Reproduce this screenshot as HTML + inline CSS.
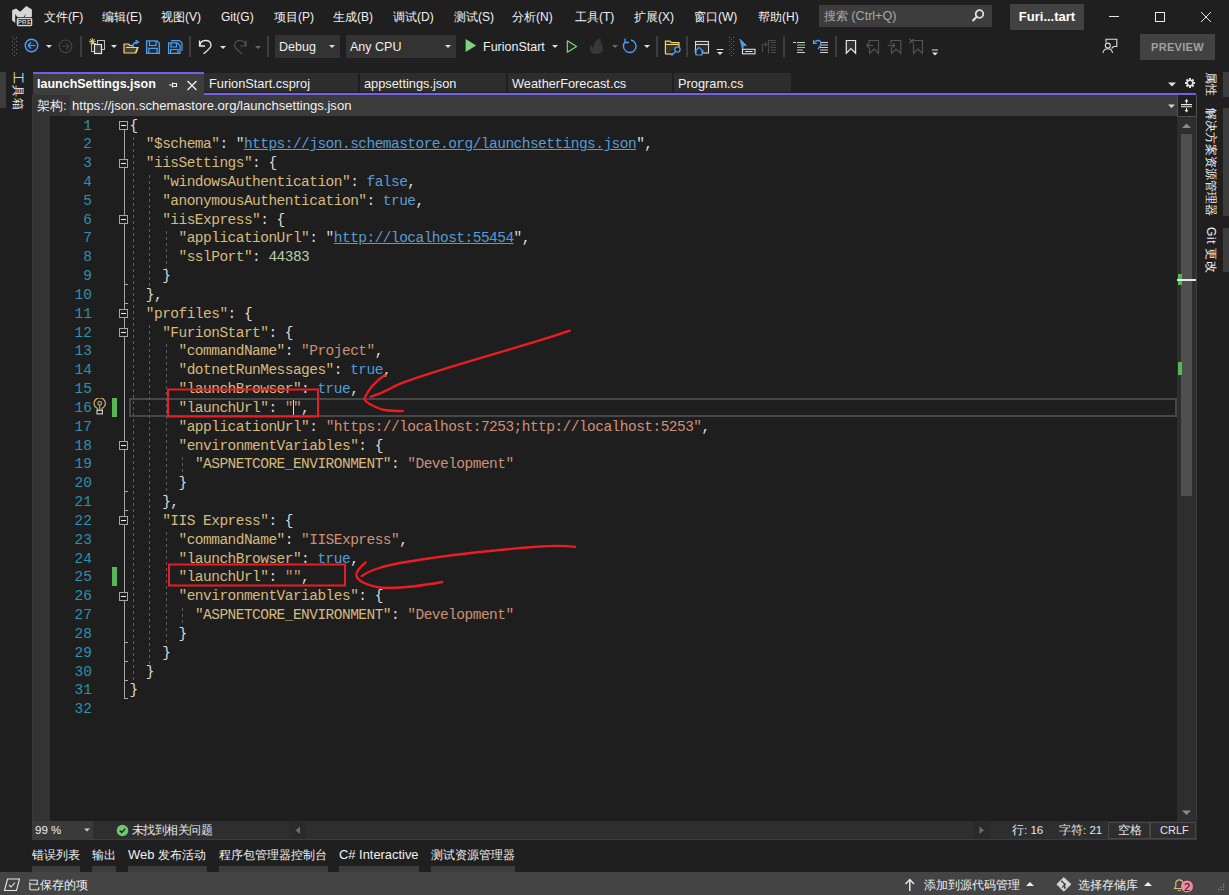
<!DOCTYPE html>
<html><head><meta charset="utf-8">
<style>
*{margin:0;padding:0;box-sizing:border-box}
html,body{width:1229px;height:895px;overflow:hidden;background:#1f1f1f;font-family:"Liberation Sans",sans-serif;color:#f0f0f0;font-size:12px}
.a{position:absolute;white-space:nowrap}
.menu span{position:absolute;top:9px;font-size:12px;line-height:16px;color:#f1f1f1}

.ln{position:absolute;width:92px;text-align:right;color:#2b91af;font-family:"Liberation Mono",monospace;font-size:14.5px;line-height:18px}
.cl{position:absolute;left:129.5px;color:#dcdcdc;font-family:"Liberation Mono",monospace;white-space:pre;font-size:14.5px;letter-spacing:-0.53px;line-height:18px}
.ig{position:absolute;width:1px;background:repeating-linear-gradient(#5c5c5c 0 3px,transparent 3px 6px)}
.ob{position:absolute;left:119px;width:9px;height:9px;border:1px solid #a5a5a5;background:#1e1e1e}
.ob:after{content:"";position:absolute;left:1px;top:3px;width:5px;height:1px;background:#f0f0f0}
.vt{writing-mode:vertical-rl;text-orientation:sideways;font-size:12px;color:#f0f0f0;letter-spacing:0}
.k{color:#d7ba7d}.s{color:#ce9178}.b{color:#569cd6}.n{color:#b5cea8}.u{color:#569cd6;text-decoration:underline}
</style></head><body>
<!-- title / menu bar -->
<div class="menu">
<svg class="a" style="left:8px;top:2px" width="30" height="28" viewBox="8 2 30 28"><path d="M12.1 10.3 L16.1 8.5 L20.2 11.8 L26.3 5.9 L31.9 9.5 V16.9 H24.6 L26.1 13.2 L23.6 16.9 H17.2 L15.2 13.9 V23 L12.1 20.4 Z" fill="#d6d6d6"/><rect x="17.4" y="18.5" width="14.2" height="7" rx="1" fill="#0e0e0e" stroke="#d6d6d6" stroke-width="1.3"/><text x="24.5" y="24.3" font-size="6.2" font-family="Liberation Sans" font-weight="bold" text-anchor="middle" fill="#d6d6d6" letter-spacing="0.3">PRE</text></svg>
<span style="left:44px">文件(F)</span>
<span style="left:102px">编辑(E)</span>
<span style="left:161px">视图(V)</span>
<span style="left:221px">Git(G)</span>
<span style="left:274px">项目(P)</span>
<span style="left:333px">生成(B)</span>
<span style="left:393px">调试(D)</span>
<span style="left:454px">测试(S)</span>
<span style="left:512px">分析(N)</span>
<span style="left:575px">工具(T)</span>
<span style="left:634px">扩展(X)</span>
<span style="left:694px">窗口(W)</span>
<span style="left:758px">帮助(H)</span>
</div>
<div class="a" style="left:819px;top:5px;width:173px;height:22px;background:#3d3d3d"></div>
<div class="a" style="left:824px;top:9px;color:#a8a8a8;font-size:12px;line-height:14px">搜索 <span style="font-size:12.6px">(Ctrl+Q)</span></div>
<svg class="a" style="left:970px;top:8px" width="16" height="16"><circle cx="9.5" cy="6" r="3.8" fill="none" stroke="#e0e0e0" stroke-width="1.8"/><path d="M7 8.5 L2.5 13" stroke="#e0e0e0" stroke-width="2.2"/></svg>
<div class="a" style="left:1010px;top:4px;width:74px;height:26px;background:#424242;font-weight:bold;font-size:13px;text-align:center;line-height:26px;color:#fff">Furi...tart</div>
<div class="a" style="left:1109px;top:16px;width:10px;height:1px;background:#e8e8e8"></div>
<div class="a" style="left:1155px;top:12px;width:10px;height:10px;border:1px solid #e8e8e8"></div>
<svg class="a" style="left:1200px;top:11px" width="12" height="12"><path d="M1 1 L11 11 M11 1 L1 11" stroke="#e8e8e8" stroke-width="1"/></svg>

<!-- toolbar placeholder -->
<svg class="a" style="left:0;top:30px" width="1229" height="34" viewBox="0 30 1229 34">
<g fill="#6a6a6a">
<rect x="12" y="37" width="1" height="1"/><rect x="16" y="37" width="1" height="1"/><rect x="14" y="39" width="1" height="1"/>
<rect x="12" y="41" width="1" height="1"/><rect x="16" y="41" width="1" height="1"/><rect x="14" y="43" width="1" height="1"/>
<rect x="12" y="45" width="1" height="1"/><rect x="16" y="45" width="1" height="1"/><rect x="14" y="47" width="1" height="1"/>
<rect x="12" y="49" width="1" height="1"/><rect x="16" y="49" width="1" height="1"/><rect x="14" y="51" width="1" height="1"/>
<rect x="12" y="53" width="1" height="1"/><rect x="16" y="53" width="1" height="1"/><rect x="14" y="55" width="1" height="1"/>
</g>
<g fill="#6a6a6a">
<rect x="729" y="37" width="1" height="1"/><rect x="733" y="37" width="1" height="1"/><rect x="731" y="39" width="1" height="1"/>
<rect x="729" y="41" width="1" height="1"/><rect x="733" y="41" width="1" height="1"/><rect x="731" y="43" width="1" height="1"/>
<rect x="729" y="45" width="1" height="1"/><rect x="733" y="45" width="1" height="1"/><rect x="731" y="47" width="1" height="1"/>
<rect x="729" y="49" width="1" height="1"/><rect x="733" y="49" width="1" height="1"/><rect x="731" y="51" width="1" height="1"/>
<rect x="729" y="53" width="1" height="1"/><rect x="733" y="53" width="1" height="1"/><rect x="731" y="55" width="1" height="1"/>
</g>
<!-- back -->
<circle cx="31.5" cy="45.5" r="6.3" fill="#1f2a36" stroke="#4aa0f0" stroke-width="1.4"/>
<path d="M28 45.5 H35 M28 45.5 L31 42.5 M28 45.5 L31 48.5" stroke="#4aa0f0" stroke-width="1.2" fill="none"/>
<!-- dropdown triangles -->
<g fill="#e0e0e0">
<path d="M46 45 H52 L49 48 Z"/>
<path d="M111 45 H117 L114 48 Z"/>
<path d="M220 46 H226 L223 49 Z"/>
<path d="M552 45 H558 L555 48 Z"/>
<path d="M644 45 H650 L647 48 Z"/>
</g>
<g fill="#6a6a6a"><path d="M255 46 H261 L258 49 Z"/><path d="M612 45 H618 L615 48 Z"/></g>
<!-- forward disabled -->
<circle cx="65.5" cy="46.3" r="6.3" fill="none" stroke="#444" stroke-width="1.2"/>
<path d="M62 46.3 H69 M69 46.3 L66 43.3 M69 46.3 L66 49.3" stroke="#444" stroke-width="1.1" fill="none"/>
<!-- separators -->
<g fill="#3e3e3e">
<rect x="80" y="36" width="2" height="21"/><rect x="189" y="36" width="2" height="21"/><rect x="267" y="36" width="2" height="21"/>
<rect x="656" y="36" width="2" height="21"/><rect x="686" y="36" width="2" height="21"/><rect x="783" y="36" width="2" height="21"/>
<rect x="835" y="36" width="2" height="21"/>
</g>
<!-- new project -->
<rect x="97.5" y="40.5" width="7" height="9" fill="none" stroke="#bdbdbd" stroke-width="1"/>
<rect x="91.5" y="43.5" width="4" height="8" fill="none" stroke="#bdbdbd" stroke-width="1"/>
<rect x="94.5" y="44.5" width="7" height="9" fill="#3a3a3a" stroke="#e6e6e6" stroke-width="1.2"/>
<g stroke="#f0d27a" stroke-width="1"><path d="M92.3 38 V44.6 M89 41.3 H95.6 M90 39 L94.6 43.6 M94.6 39 L90 43.6"/></g>
<!-- open folder -->
<path d="M124 53 V44 H128.5 L130 45.5 H133 V47.5 H137.5 L135.5 53 Z" fill="#4a4230" stroke="#f0d27a" stroke-width="1.2" stroke-linejoin="round"/>
<path d="M126 47.5 H138 L136 53" fill="none" stroke="#f0d27a" stroke-width="1.2"/>
<path d="M132.5 47 Q133 42.5 137 42" fill="none" stroke="#4aa0f0" stroke-width="1.5"/>
<path d="M135.5 40 L138.5 42 L135.5 44" fill="none" stroke="#4aa0f0" stroke-width="1.3"/>
<!-- save -->
<path d="M146.6 40.8 H157 L159.4 43.2 V53.4 H146.6 Z" fill="#1f2a36" stroke="#4aa0f0" stroke-width="1.3"/>
<path d="M149.5 41 V45.5 H156 V41" fill="none" stroke="#4aa0f0" stroke-width="1.2"/>
<path d="M148.8 53.4 V48.3 H157.2 V53.4" fill="none" stroke="#4aa0f0" stroke-width="1.2"/>
<!-- save all -->
<path d="M168.6 42.8 H177.5 L180 45.3 V53.4 H168.6 Z" fill="#1f2a36" stroke="#4aa0f0" stroke-width="1.3"/>
<path d="M171 43 V47 H176.5 V43" fill="none" stroke="#4aa0f0" stroke-width="1.2"/>
<path d="M170.6 53.4 V49.5 H178 V53.4" fill="none" stroke="#4aa0f0" stroke-width="1.2"/>
<path d="M171 40.6 H179.5 L182 43 V51" fill="none" stroke="#4aa0f0" stroke-width="1.2"/>
<!-- undo -->
<path d="M200 46 Q200 40.5 205.5 40.5 Q211 40.5 211 45.5 Q211 48 203.5 53.8" fill="none" stroke="#e6e6e6" stroke-width="1.3"/>
<path d="M199.5 40.5 V46 H205" fill="none" stroke="#e6e6e6" stroke-width="1.3"/>
<!-- redo disabled -->
<path d="M245.5 46 Q245.5 40.5 240 40.5 Q234.5 40.5 234.5 45.5 Q234.5 48 242 53.8" fill="none" stroke="#555" stroke-width="1.2"/>
<path d="M246 40.5 V46 H240.5" fill="none" stroke="#555" stroke-width="1.2"/>
<!-- play -->
<path d="M465.6 38.9 L476.2 45.4 L465.6 51.9 Z" fill="#7ed47e"/>
<path d="M567.3 40.8 L576.6 46.5 L567.3 52.2 Z" fill="#1f2a1f" stroke="#7ed47e" stroke-width="1.2" stroke-linejoin="round"/>
<!-- flame disabled -->
<path d="M596 54 C590 54 588.5 48 591 44.5 C592 47 593 47.5 594 47.5 C593 43 596 39.5 601 38 C599 41 603 45 603 48.5 C603 52 600 54 596 54 Z" fill="#383838"/>
<!-- refresh -->
<path d="M625.5 41.5 A6.3 6.3 0 1 0 631 40" fill="none" stroke="#4aa0f0" stroke-width="1.4"/>
<path d="M625 38.5 V42.5 H629" fill="none" stroke="#4aa0f0" stroke-width="1.3"/>
<!-- folder search -->
<path d="M665.4 54 V41.2 H670 L671.5 42.7 H679 V48" fill="#3a3528" stroke="#f0d27a" stroke-width="1.2"/>
<path d="M665.4 54 H673" stroke="#f0d27a" stroke-width="1.2"/>
<path d="M665.4 44.5 H679" stroke="#f0d27a" stroke-width="1"/>
<circle cx="677.5" cy="49.5" r="2.6" fill="#1f1f1f" stroke="#4aa0f0" stroke-width="1.3"/>
<path d="M675.5 51.5 L671.5 55.5" stroke="#4aa0f0" stroke-width="1.4"/>
<!-- window home -->
<rect x="695.5" y="41.5" width="13" height="11.5" fill="#2c2c2c" stroke="#d8d8d8" stroke-width="1.1"/>
<path d="M695.5 44.5 H708.5" stroke="#d8d8d8" stroke-width="1.1"/>
<path d="M694.5 51.5 L699 47.5 L703.5 51.5 M696 50.5 V55 H702 V50.5" fill="#1f1f1f" stroke="#4aa0f0" stroke-width="1.2"/>
<path d="M716.7 49.5 H723.4" stroke="#e0e0e0" stroke-width="1"/><path d="M717 52 H723 L720 55 Z" fill="#e0e0e0"/>
<path d="M931.8 50 H938" stroke="#e0e0e0" stroke-width="1"/><path d="M932 52.5 H938 L935 55.5 Z" fill="#e0e0e0"/>
<!-- cursor -->
<path d="M740 39 L746.5 45.5 H743.5 L742.5 49.5 Z" fill="#4aa0f0" stroke="#4aa0f0" stroke-width="0.8" stroke-linejoin="round"/>
<path d="M742.5 47 V52" stroke="#4aa0f0" stroke-width="1"/>
<rect x="742.5" y="49.3" width="12.5" height="4.5" fill="#1f1f1f" stroke="#e0e0e0" stroke-width="1.1"/>
<path d="M745 51.5 H752.5" stroke="#e0e0e0" stroke-width="1"/>
<!-- disabled multi -->
<g stroke="#4a4a4a" stroke-width="1.1" fill="none"><path d="M762.5 52 V44.5 H766"/><path d="M765 42.5 L767 44.5 L765 46.5"/><path d="M768.5 53.5 V40.5 H776"/><path d="M770.5 42.5 H776 M770.5 45 H776 M770.5 47.5 H776 M770.5 50 H776 M770.5 52.5 H776"/></g>
<!-- indent -->
<g stroke="#cfcfcf" stroke-width="1.1"><path d="M793 42.5 H796 M797 42.5 H805 M797 52.5 H805 M797 50 H803"/></g>
<g stroke="#7ed47e" stroke-width="1.1"><path d="M797 45 H805 M797 47.5 H805"/></g>
<!-- outdent -->
<g stroke="#cfcfcf" stroke-width="1.1"><path d="M820 42.5 H828 M820 45 H828 M820 47.5 H828 M820 50 H828 M820 52.5 H828"/></g>
<path d="M814 42.5 Q818 39 820.5 41.5 Q822 44 818 49" fill="none" stroke="#4aa0f0" stroke-width="1.3"/>
<path d="M813.5 40 V43.5 H817" fill="none" stroke="#4aa0f0" stroke-width="1.2"/>
<!-- bookmarks -->
<path d="M846.3 40.5 H855.6 V53.2 L851 48.5 L846.3 53.2 Z" fill="#333" stroke="#e6e6e6" stroke-width="1.2" stroke-linejoin="miter"/>
<g fill="none" stroke="#555" stroke-width="1.1">
<path d="M869 44 V40.5 H878.5 V53.5 L874 49 L869.5 53.5 V47"/><path d="M866.5 45.5 H873 M866.5 45.5 L868.5 43.5 M866.5 45.5 L868.5 47.5"/>
<path d="M891 44 V40.5 H900.8 V53.5 L896 49 L891.5 53.5 V47"/><path d="M887.5 45.5 H895 M895 45.5 L893 43.5 M895 45.5 L893 47.5"/>
<path d="M913 40.5 H922.5 V53.5 L918 49 L913.5 53.5 V44"/><path d="M909.5 39 L913.5 43 M913.5 39 L909.5 43"/>
</g>
<!-- feedback -->
<g fill="none" stroke="#e0e0e0" stroke-width="1.1">
<path d="M1106 42.5 V39.3 H1116.8 V46.5 H1113.5 L1111.5 48.5"/>
<circle cx="1107.8" cy="45.6" r="2.5"/>
<path d="M1103 53 Q1103.5 48.8 1107.8 48.8 Q1112 48.8 1112.5 53"/>
</g>
</svg>
<div class="a" style="left:275px;top:35px;width:65px;height:23px;background:#333333"></div>
<div class="a" style="left:279px;top:40px;font-size:12.5px;color:#f0f0f0">Debug</div>
<svg class="a" style="left:329px;top:45px" width="7" height="4"><path d="M0 0 H6 L3 3 Z" fill="#e0e0e0"/></svg>
<div class="a" style="left:346px;top:35px;width:110px;height:23px;background:#333333"></div>
<div class="a" style="left:350px;top:40px;font-size:12.5px;color:#f0f0f0">Any CPU</div>
<svg class="a" style="left:445px;top:45px" width="7" height="4"><path d="M0 0 H6 L3 3 Z" fill="#e0e0e0"/></svg>
<div class="a" style="left:483px;top:40px;font-size:12.5px;color:#f0f0f0">FurionStart</div>
<div class="a" style="left:1140px;top:34px;width:75px;height:26px;background:#424242"></div>
<div class="a" style="left:1140px;top:41px;width:75px;text-align:center;font-size:11px;font-weight:bold;color:#a0a0a0;letter-spacing:0.3px">PREVIEW</div>


<!-- left strip -->
<div class="a" style="left:0;top:72px;width:6px;height:36px;background:#3d3d3d"></div>

<!-- tabs -->
<div class="a" style="left:33px;top:72px;width:171px;height:2px;background:#7160e8"></div>
<div class="a" style="left:33px;top:74px;width:171px;height:21px;background:#3d3d3d"></div>
<div class="a" style="left:37px;top:76px;font-weight:bold;font-size:12.5px;line-height:16px;color:#fff">launchSettings.json</div>
<div class="a" style="left:204px;top:73px;width:154px;height:19px;background:#2d2d2d"></div>
<div class="a" style="left:209px;top:76px;font-size:12.8px;line-height:16px;color:#f0f0f0">FurionStart.csproj</div>
<div class="a" style="left:360px;top:73px;width:146px;height:19px;background:#2d2d2d"></div>
<div class="a" style="left:364px;top:76px;font-size:12.8px;line-height:16px;color:#f0f0f0">appsettings.json</div>
<div class="a" style="left:508px;top:73px;width:164px;height:19px;background:#2d2d2d"></div>
<div class="a" style="left:512px;top:76px;font-size:12.8px;line-height:16px;color:#f0f0f0">WeatherForecast.cs</div>
<div class="a" style="left:674px;top:73px;width:117px;height:19px;background:#2d2d2d"></div>
<div class="a" style="left:678px;top:76px;font-size:12.8px;line-height:16px;color:#f0f0f0">Program.cs</div>
<div class="a" style="left:204px;top:93px;width:992px;height:2px;background:#7160e8"></div>

<!-- nav bar -->
<div class="a" style="left:32px;top:95px;width:1145px;height:21px;background:#3b3b3b"></div>
<div class="a" style="left:33px;top:95px;width:37px;height:21px;background:#333333"></div><div class="a" style="left:37px;top:98px;font-size:13px;line-height:16px;color:#f0f0f0">架构:</div><div class="a" style="left:72px;top:98px;font-size:13.1px;line-height:16px;color:#f0f0f0">https://json.schemastore.org/launchsettings.json</div>

<!-- editor -->
<div class="a" style="left:32px;top:116px;width:1145px;height:705px;background:#1e1e1e"></div>
<div class="a" style="left:33px;top:116px;width:17px;height:705px;background:#333333"></div><div class="a" style="left:32px;top:95px;width:1px;height:726px;background:#3a3a3a"></div>
<div class="a" style="left:129px;top:398px;width:1048px;height:19px;border:2px solid #464646"></div>

<div class="ln" style="top:116.50px">1</div>
<div class="cl" style="top:116.50px">{</div>
<div class="ln" style="top:135.33px">2</div>
<div class="cl" style="top:135.33px">  <span class="k">&quot;$schema&quot;</span>: &quot;<span class="u">https://json.schemastore.org/launchsettings.json</span>&quot;,</div>
<div class="ln" style="top:154.16px">3</div>
<div class="cl" style="top:154.16px">  <span class="k">&quot;iisSettings&quot;</span>: {</div>
<div class="ln" style="top:172.99px">4</div>
<div class="cl" style="top:172.99px">    <span class="k">&quot;windowsAuthentication&quot;</span>: <span class="b">false</span>,</div>
<div class="ln" style="top:191.82px">5</div>
<div class="cl" style="top:191.82px">    <span class="k">&quot;anonymousAuthentication&quot;</span>: <span class="b">true</span>,</div>
<div class="ln" style="top:210.65px">6</div>
<div class="cl" style="top:210.65px">    <span class="k">&quot;iisExpress&quot;</span>: {</div>
<div class="ln" style="top:229.48px">7</div>
<div class="cl" style="top:229.48px">      <span class="k">&quot;applicationUrl&quot;</span>: &quot;<span class="u">http://localhost:55454</span>&quot;,</div>
<div class="ln" style="top:248.31px">8</div>
<div class="cl" style="top:248.31px">      <span class="k">&quot;sslPort&quot;</span>: <span class="n">44383</span></div>
<div class="ln" style="top:267.14px">9</div>
<div class="cl" style="top:267.14px">    }</div>
<div class="ln" style="top:285.97px">10</div>
<div class="cl" style="top:285.97px">  },</div>
<div class="ln" style="top:304.80px">11</div>
<div class="cl" style="top:304.80px">  <span class="k">&quot;profiles&quot;</span>: {</div>
<div class="ln" style="top:323.63px">12</div>
<div class="cl" style="top:323.63px">    <span class="k">&quot;FurionStart&quot;</span>: {</div>
<div class="ln" style="top:342.46px">13</div>
<div class="cl" style="top:342.46px">      <span class="k">&quot;commandName&quot;</span>: <span class="s">&quot;Project&quot;</span>,</div>
<div class="ln" style="top:361.29px">14</div>
<div class="cl" style="top:361.29px">      <span class="k">&quot;dotnetRunMessages&quot;</span>: <span class="b">true</span>,</div>
<div class="ln" style="top:380.12px">15</div>
<div class="cl" style="top:380.12px">      <span class="k">&quot;launchBrowser&quot;</span>: <span class="b">true</span>,</div>
<div class="ln" style="top:398.95px">16</div>
<div class="cl" style="top:398.95px">      <span class="k">&quot;launchUrl&quot;</span>: <span class="s">&quot;&quot;</span>,</div>
<div class="ln" style="top:417.78px">17</div>
<div class="cl" style="top:417.78px">      <span class="k">&quot;applicationUrl&quot;</span>: <span class="s">&quot;https://localhost:7253;http://localhost:5253&quot;</span>,</div>
<div class="ln" style="top:436.61px">18</div>
<div class="cl" style="top:436.61px">      <span class="k">&quot;environmentVariables&quot;</span>: {</div>
<div class="ln" style="top:455.44px">19</div>
<div class="cl" style="top:455.44px">        <span class="k">&quot;ASPNETCORE_ENVIRONMENT&quot;</span>: <span class="s">&quot;Development&quot;</span></div>
<div class="ln" style="top:474.27px">20</div>
<div class="cl" style="top:474.27px">      }</div>
<div class="ln" style="top:493.10px">21</div>
<div class="cl" style="top:493.10px">    },</div>
<div class="ln" style="top:511.93px">22</div>
<div class="cl" style="top:511.93px">    <span class="k">&quot;IIS Express&quot;</span>: {</div>
<div class="ln" style="top:530.76px">23</div>
<div class="cl" style="top:530.76px">      <span class="k">&quot;commandName&quot;</span>: <span class="s">&quot;IISExpress&quot;</span>,</div>
<div class="ln" style="top:549.59px">24</div>
<div class="cl" style="top:549.59px">      <span class="k">&quot;launchBrowser&quot;</span>: <span class="b">true</span>,</div>
<div class="ln" style="top:568.42px">25</div>
<div class="cl" style="top:568.42px">      <span class="k">&quot;launchUrl&quot;</span>: <span class="s">&quot;&quot;</span>,</div>
<div class="ln" style="top:587.25px">26</div>
<div class="cl" style="top:587.25px">      <span class="k">&quot;environmentVariables&quot;</span>: {</div>
<div class="ln" style="top:606.08px">27</div>
<div class="cl" style="top:606.08px">        <span class="k">&quot;ASPNETCORE_ENVIRONMENT&quot;</span>: <span class="s">&quot;Development&quot;</span></div>
<div class="ln" style="top:624.91px">28</div>
<div class="cl" style="top:624.91px">      }</div>
<div class="ln" style="top:643.74px">29</div>
<div class="cl" style="top:643.74px">    }</div>
<div class="ln" style="top:662.57px">30</div>
<div class="cl" style="top:662.57px">  }</div>
<div class="ln" style="top:681.40px">31</div>
<div class="cl" style="top:681.40px">}</div>
<div class="ln" style="top:700.23px">32</div>
<div class="cl" style="top:700.23px"></div>
<div class="ig" style="left:133.0px;top:136.8px;height:546.1px"></div>
<div class="ig" style="left:149.0px;top:174.5px;height:113.0px"></div>
<div class="ig" style="left:166.0px;top:231.0px;height:37.7px"></div>
<div class="ig" style="left:149.0px;top:325.1px;height:338.9px"></div>
<div class="ig" style="left:166.0px;top:344.0px;height:150.6px"></div>
<div class="ig" style="left:182.0px;top:456.9px;height:18.8px"></div>
<div class="ig" style="left:166.0px;top:532.3px;height:113.0px"></div>
<div class="ig" style="left:182.0px;top:607.6px;height:18.8px"></div>
<div class="a" style="left:124px;top:130px;width:1px;height:569px;background:#a5a5a5"></div>
<div class="ob" style="top:121px"></div>
<div class="a" style="left:124px;top:698px;width:4px;height:1px;background:#a5a5a5"></div>
<div class="ob" style="top:159px"></div>
<div class="a" style="left:124px;top:303px;width:4px;height:1px;background:#a5a5a5"></div>
<div class="ob" style="top:215px"></div>
<div class="a" style="left:124px;top:284px;width:4px;height:1px;background:#a5a5a5"></div>
<div class="ob" style="top:309px"></div>
<div class="a" style="left:124px;top:680px;width:4px;height:1px;background:#a5a5a5"></div>
<div class="ob" style="top:328px"></div>
<div class="a" style="left:124px;top:510px;width:4px;height:1px;background:#a5a5a5"></div>
<div class="ob" style="top:441px"></div>
<div class="a" style="left:124px;top:491px;width:4px;height:1px;background:#a5a5a5"></div>
<div class="ob" style="top:516px"></div>
<div class="a" style="left:124px;top:661px;width:4px;height:1px;background:#a5a5a5"></div>
<div class="ob" style="top:592px"></div>
<div class="a" style="left:124px;top:642px;width:4px;height:1px;background:#a5a5a5"></div>

<!-- editor status -->
<div class="a" style="left:32px;top:821px;width:1165px;height:19px;background:#2e2e2e;border-bottom:1px solid #3c3c3c"></div>
<div class="a" style="left:32px;top:821px;width:61px;height:18px;background:#3a3a3a"></div>
<div class="a" style="left:35px;top:823px;font-size:11.5px;line-height:14px">99 %</div>

<!-- bottom tabs -->
<div class="a" style="left:32px;top:848px;font-size:12px;line-height:14px">错误列表</div>
<div class="a" style="left:92px;top:848px;font-size:12px;line-height:14px">输出</div>
<div class="a" style="left:128px;top:848px;font-size:12px;line-height:14px"><span style="font-size:13px">Web</span> 发布活动</div>
<div class="a" style="left:219px;top:848px;font-size:12px;line-height:14px">程序包管理器控制台</div>
<div class="a" style="left:339px;top:848px;font-size:12.9px;line-height:14px">C# Interactive</div>
<div class="a" style="left:431px;top:848px;font-size:12px;line-height:14px">测试资源管理器</div>

<!-- status bar -->
<div class="a" style="left:0;top:872px;width:1229px;height:23px;background:#444444"></div>
<div class="a" style="left:28px;top:878px;font-size:12px;line-height:14px">已保存的项</div>
<!-- lightbulb -->
<svg class="a" style="left:92px;top:398px" width="16" height="18" viewBox="92 397 16 18">
<path d="M97.5 409.5 V407.5 Q94 405.5 94 402.5 A5.7 5.7 0 0 1 105.4 402.5 Q105.4 405.5 102 407.5 V409.5" fill="none" stroke="#c9ab70" stroke-width="1.2"/>
<circle cx="99.7" cy="402.3" r="1.8" fill="none" stroke="#c9ab70" stroke-width="1.2"/>
<path d="M99.7 404 V409" stroke="#c9ab70" stroke-width="1.1"/>
<rect x="97" y="409.3" width="5.4" height="3.6" fill="#1e1e1e" stroke="#d8d8d8" stroke-width="1.1"/>
</svg>
<div class="a" style="left:112px;top:398px;width:5px;height:19px;background:#57b757"></div>
<div class="a" style="left:112px;top:567px;width:5px;height:19px;background:#57b757"></div>
<!-- caret -->
<div class="a" style="left:293px;top:400px;width:1px;height:15px;background:#dcdcdc"></div>
<!-- scrollbar -->
<div class="a" style="left:1177px;top:116px;width:20px;height:705px;background:#2e2e2e;border-right:1px solid #3e3e3e"></div>
<svg class="a" style="left:1182px;top:123px" width="10" height="6"><path d="M0 5 L4.5 0.5 L9 5 Z" fill="#8a8a8a"/></svg>
<div class="a" style="left:1181px;top:134px;width:11px;height:362px;background:#4f4f4f"></div>
<div class="a" style="left:1178px;top:274px;width:4px;height:11px;background:#57b757"></div>
<div class="a" style="left:1178px;top:362px;width:4px;height:13px;background:#57b757"></div>
<div class="a" style="left:1177px;top:279px;width:19px;height:2px;background:#e8e8e8"></div>
<svg class="a" style="left:1182px;top:810px" width="10" height="6"><path d="M0 0.5 L9 0.5 L4.5 5 Z" fill="#8a8a8a"/></svg>
<!-- split button -->
<div class="a" style="left:1177px;top:95px;width:20px;height:22px;background:#1f1f1f;border-left:1px solid #505050;border-bottom:1px solid #505050;border-right:1px solid #505050"></div>
<svg class="a" style="left:1180px;top:97px" width="14" height="18" viewBox="1180 97 14 18">
<path d="M1181 104.6 H1192 M1181 106.8 H1192" stroke="#e6e6e6" stroke-width="1.1"/>
<path d="M1186.5 99.5 V103.5 M1186.5 108 V112" stroke="#e6e6e6" stroke-width="1.1"/>
<path d="M1184.5 101.5 L1186.5 99 L1188.5 101.5 Z M1184.5 110 L1186.5 112.5 L1188.5 110 Z" fill="#e6e6e6"/>
</svg>
<!-- tab strip right: dropdown + gear -->
<svg class="a" style="left:1168px;top:82px" width="9" height="5"><path d="M0 0.5 H8 L4 4.5 Z" fill="#e0e0e0"/></svg>
<svg class="a" style="left:1184px;top:77px" width="12" height="12" viewBox="-6 -6 12 12"><g fill="#e0e0e0"><circle r="3.6"/><rect x="-1" y="-5" width="2" height="10"/><rect x="-1" y="-5" width="2" height="10" transform="rotate(45)"/><rect x="-1" y="-5" width="2" height="10" transform="rotate(90)"/><rect x="-1" y="-5" width="2" height="10" transform="rotate(135)"/></g><circle r="2" fill="#1f1f1f"/></svg>
<!-- nav dropdown -->
<svg class="a" style="left:1168px;top:104px" width="8" height="5"><path d="M0 0.5 H7 L3.5 4 Z" fill="#d8d8d8"/></svg>
<!-- tab pin & close -->
<svg class="a" style="left:166px;top:78px" width="34" height="14" viewBox="166 78 34 14">
<path d="M169 85 H172.5 M172.5 82.5 V87.5 M172.5 83.5 H176.5 V86.5 H172.5" fill="none" stroke="#f0f0f0" stroke-width="1.1"/>
<path d="M187.5 81 L196.5 90 M196.5 81 L187.5 90" stroke="#f0f0f0" stroke-width="1.3"/>
</svg>
<!-- right strip -->
<div class="a" style="left:1223px;top:72px;width:6px;height:25px;background:#3d3d3d"></div>
<div class="a" style="left:1223px;top:108px;width:6px;height:108px;background:#3d3d3d"></div>
<div class="a" style="left:1223px;top:228px;width:6px;height:44px;background:#3d3d3d"></div>
<div class="a vt" style="left:1202px;top:72px">属性</div>
<div class="a vt" style="left:1202px;top:108px">解决方案资源管理器</div>
<div class="a vt" style="left:1202px;top:227px;letter-spacing:0.6px">Git 更改</div>
<!-- left strip -->
<div class="a vt" style="left:9px;top:72px;letter-spacing:1px">工具箱</div>
<!-- annotations -->
<svg class="a" style="left:0;top:0" width="1229" height="895">
<g fill="none" stroke="#ec1c24" stroke-width="2" stroke-linecap="round">
<rect x="168" y="389.5" width="150" height="27"/>
<rect x="169" y="564.5" width="176" height="21"/>
</g>
<g fill="none" stroke="#ec1c24" stroke-width="2.3" stroke-linecap="round">
<path d="M569.7 330.7 C530 345 450 365 402.3 382.8 C396 385 388 390 380 393.4 L370.6 396.9"/>
<path d="M384.6 375.3 C376 381 368 390 364.2 398.9 C366 403 372 406 382 409.5 C390 411 396 411 402.8 411"/>
<path d="M575 546.8 Q560 545 540 546.5 C500 549.5 440 556 400 563 C385 566 372 569 361.7 576.1"/>
<path d="M365.6 562.5 C360 567 356.3 572 356.3 575.2 C357 580 365 585 380 587.5 C395 589 420 586 442.3 582"/>
</g>
</svg>
<!-- editor status bar items -->
<svg class="a" style="left:84px;top:828px" width="7" height="4"><path d="M0 0.5 H6 L3 3.5 Z" fill="#d0d0d0"/></svg>
<svg class="a" style="left:116px;top:824px" width="13" height="13" viewBox="0 0 13 13"><circle cx="6.5" cy="6.5" r="5.8" fill="#6cc86c"/><path d="M3.7 6.6 L5.7 8.5 L9.3 4.6" fill="none" stroke="#1e1e1e" stroke-width="1.4"/></svg>
<div class="a" style="left:132px;top:823px;font-size:12px;letter-spacing:-0.55px;line-height:14px;color:#e6e6e6">未找到相关问题</div>
<div class="a" style="left:289px;top:821px;width:17px;height:18px;background:#2a2a2a"></div>
<svg class="a" style="left:295px;top:826px" width="6" height="9"><path d="M5 0.5 V8 L0.5 4.2 Z" fill="#6e6e6e"/></svg>

<div class="a" style="left:973px;top:821px;width:17px;height:18px;background:#2a2a2a"></div>
<svg class="a" style="left:979px;top:826px" width="6" height="9"><path d="M0.5 0.5 V8 L5 4.2 Z" fill="#6e6e6e"/></svg>
<div class="a" style="left:1012px;top:823px;font-size:12px;line-height:14px;color:#e6e6e6">行<span style="font-size:11.5px">: 16</span></div>
<div class="a" style="left:1059px;top:823px;font-size:12px;line-height:14px;color:#e6e6e6">字符<span style="font-size:11.5px">: 21</span></div>
<div class="a" style="left:1108px;top:822px;width:42px;height:17px;border:1px solid #474747"></div>
<div class="a" style="left:1118px;top:823px;font-size:12px;line-height:14px;color:#e6e6e6">空格</div>
<div class="a" style="left:1150px;top:822px;width:46px;height:17px;border:1px solid #474747"></div>
<div class="a" style="left:1160px;top:823px;font-size:11px;line-height:14px;color:#e6e6e6">CRLF</div>
<!-- bottom tab bars -->
<div class="a" style="left:32px;top:866px;width:48px;height:6px;background:#3d3d3d"></div>
<div class="a" style="left:92px;top:866px;width:24px;height:6px;background:#3d3d3d"></div>
<div class="a" style="left:128px;top:866px;width:79px;height:6px;background:#3d3d3d"></div>
<div class="a" style="left:219px;top:866px;width:109px;height:6px;background:#3d3d3d"></div>
<div class="a" style="left:339px;top:866px;width:80px;height:6px;background:#3d3d3d"></div>
<div class="a" style="left:431px;top:866px;width:84px;height:6px;background:#3d3d3d"></div>
<!-- status bar items -->
<svg class="a" style="left:3px;top:878px" width="18" height="14" viewBox="0 0 18 14"><path d="M4.5 1 H16.5 L13.5 12.5 H1.5 Z" fill="none" stroke="#e6e6e6" stroke-width="1.1"/><path d="M6 7 L8 9 L12 4.5" fill="none" stroke="#e6e6e6" stroke-width="1.1"/></svg>
<svg class="a" style="left:904px;top:878px" width="12" height="14" viewBox="0 0 12 14"><path d="M5.8 13 V2 M1.5 6 L5.8 1.5 L10 6" fill="none" stroke="#e6e6e6" stroke-width="1.5"/></svg>
<div class="a" style="left:924px;top:877px;font-size:12px;color:#f0f0f0">添加到源代码管理</div>
<svg class="a" style="left:1026px;top:881px" width="9" height="6"><path d="M0 5 L4 1 L8 5 Z" fill="#f0f0f0"/></svg>
<svg class="a" style="left:1056px;top:877px" width="16" height="16" viewBox="0 0 16 16"><path d="M7.8 0.5 L15 7.3 L7.8 14.3 L0.8 7.3 Z" fill="#d6d6d6" stroke="#d6d6d6" stroke-width="0.8" stroke-linejoin="round"/><path d="M6 4.5 L8.8 7.3 V10.8 M8.8 7.3 L6.2 10.6" stroke="#3a3a3a" stroke-width="1.1" fill="none"/><circle cx="8.8" cy="7.3" r="1" fill="#3a3a3a"/><circle cx="8.8" cy="10.8" r="1" fill="#3a3a3a"/><circle cx="5.9" cy="4.3" r="0.9" fill="#3a3a3a"/></svg>
<div class="a" style="left:1078px;top:877px;font-size:12px;color:#f0f0f0">选择存储库</div>
<svg class="a" style="left:1144px;top:881px" width="9" height="6"><path d="M0 5 L4 1 L8 5 Z" fill="#f0f0f0"/></svg>
<svg class="a" style="left:1172px;top:875px" width="22" height="20" viewBox="1172 875 22 20"><path d="M1174.3 888.5 H1184.5 L1183 886.5 V882.5 A3.8 3.8 0 0 0 1175.8 882.5 V886.5 Z" fill="none" stroke="#d9c27e" stroke-width="1.1" stroke-linejoin="round"/><path d="M1177.5 890 Q1179.2 891.5 1181 890" fill="none" stroke="#d9c27e" stroke-width="1"/><circle cx="1187" cy="886.6" r="6" fill="#f08aa0"/><text x="1187" y="890.6" font-size="11" font-family="Liberation Sans" text-anchor="middle" fill="#101030">2</text></svg>
<g></g>
<svg class="a" style="left:1216px;top:883px" width="10" height="10" viewBox="1216 883 10 10"><g fill="#8a8a8a"><rect x="1223" y="884" width="1.2" height="1.2"/><rect x="1220.5" y="886.5" width="1.2" height="1.2"/><rect x="1223" y="886.5" width="1.2" height="1.2"/><rect x="1218" y="889" width="1.2" height="1.2"/><rect x="1220.5" y="889" width="1.2" height="1.2"/><rect x="1223" y="889" width="1.2" height="1.2"/></g></svg>

</body></html>
